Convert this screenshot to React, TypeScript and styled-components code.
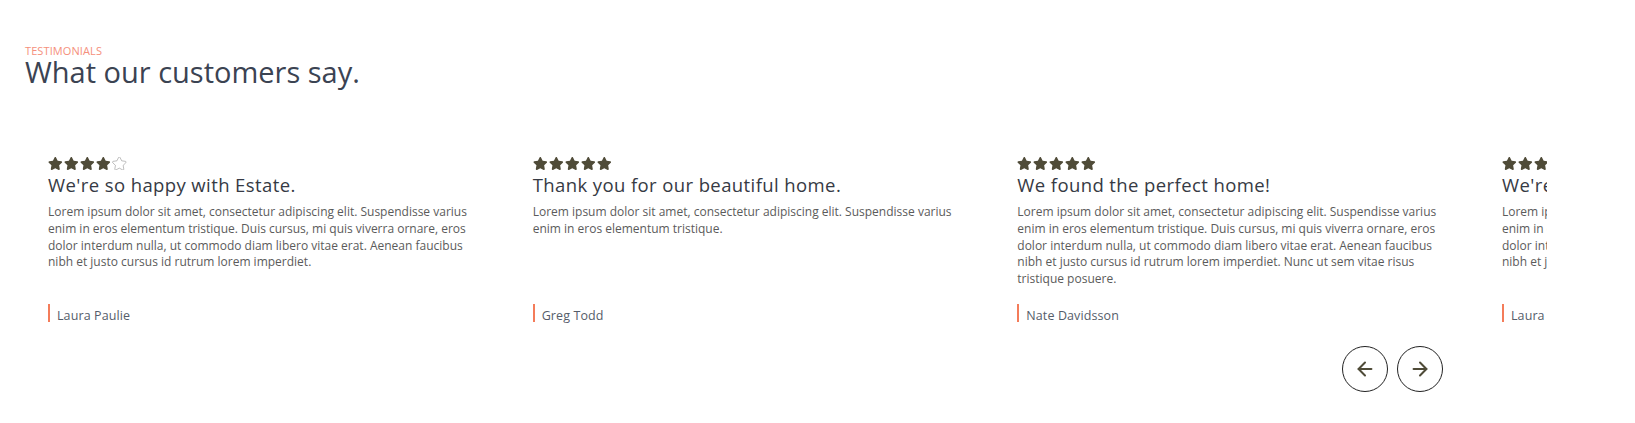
import React from "react";
import styled, { createGlobalStyle } from "styled-components";
import { ArrowLeft, ArrowRight } from "lucide-react";

const GlobalStyle = createGlobalStyle`
  html, body { margin: 0; padding: 0; background: #ffffff; }
  body { font-family: "Open Sans", "Liberation Sans", sans-serif; }
  * { box-sizing: border-box; }
`;

const Section = styled.section`
  padding: 45px 0 0 25px;
  width: 1635px;
  height: 423px;
  overflow: hidden;
`;

const Eyebrow = styled.div`
  font-size: 11px;
  line-height: 12px;
  color: #f5907c;
  text-transform: uppercase;
  letter-spacing: 0.1px;
`;

const Heading = styled.h2`
  margin: 0;
  font-size: 29px;
  line-height: 30px;
  font-weight: 400;
  color: #3b4352;
`;

const Mask = styled.div`
  width: 1522px;
  overflow: hidden;
  margin-top: 70px;
`;

const Track = styled.div`
  display: flex;
  align-items: stretch;
`;

const Slide = styled.article`
  flex: 0 0 484.667px;
  padding: 0 23px;
  display: flex;
  flex-direction: column;
`;

const Stars = styled.div`
  display: flex;
  gap: 1.4px;
  height: 13px;
  align-items: center;
`;

const CardTitle = styled.h3`
  margin: 3px 0 0;
  font-size: 18.5px;
  line-height: 24px;
  letter-spacing: 0.4px;
  font-weight: 400;
  color: #363a44;
  white-space: nowrap;
`;

const Body = styled.p`
  margin: 7px 0 16px;
  font-size: 12px;
  line-height: 16.75px;
  color: #5b5b5b;
`;

const Author = styled.div`
  margin-top: auto;
  display: flex;
  align-items: flex-start;
  gap: 7px;
`;

const AccentBar = styled.span`
  flex: 0 0 2px;
  height: 18px;
  background: #f47c5a;
`;

const AuthorName = styled.span`
  margin-top: 2px;
  font-size: 12.5px;
  line-height: 20px;
  letter-spacing: 0.1px;
  color: #555d6a;
  white-space: nowrap;
`;

const ArrowRow = styled.div`
  width: 1522px;
  display: flex;
  justify-content: flex-end;
  gap: 9px;
  padding-right: 104px;
  margin-top: 20px;
`;

const ArrowButton = styled.button`
  width: 46px;
  height: 46px;
  border-radius: 50%;
  border: 1px solid #222222;
  background: #ffffff;
  display: flex;
  align-items: center;
  justify-content: center;
  padding: 0;
  color: #4f4b38;
  cursor: pointer;
`;

const Star: React.FC<{ filled: boolean }> = ({ filled }) => (
  <svg width="14.6" height="13" viewBox="0 0 576 512" aria-hidden="true">
    <path
      d="M259.3 17.8L194 150.2 47.9 171.5c-26.2 3.8-36.7 36.1-17.7 54.6l105.7 103-25 145.5c-4.5 26.3 23.2 46 46.4 33.7L288 439.6l130.7 68.7c23.2 12.2 50.9-7.4 46.4-33.7l-25-145.5 105.7-103c19-18.5 8.5-50.8-17.700-54.6L382 150.2 316.7 17.8c-11.7-23.6-45.6-23.9-57.4 0z"
      fill={filled ? "#4f4b38" : "none"}
      stroke={filled ? "none" : "#8a8a8a"}
      strokeWidth={filled ? 0 : 22}
    />
  </svg>
);

type Testimonial = {
  rating: number;
  title: string;
  body: string;
  author: string;
};

const LONG =
  "Lorem ipsum dolor sit amet, consectetur adipiscing elit. Suspendisse varius enim in eros elementum tristique. Duis cursus, mi quis viverra ornare, eros dolor interdum nulla, ut commodo diam libero vitae erat. Aenean faucibus nibh et justo cursus id rutrum lorem imperdiet.";

const testimonials: Testimonial[] = [
  { rating: 4, title: "We're so happy with Estate.", body: LONG, author: "Laura Paulie" },
  {
    rating: 5,
    title: "Thank you for our beautiful home.",
    body: "Lorem ipsum dolor sit amet, consectetur adipiscing elit. Suspendisse varius enim in eros elementum tristique.",
    author: "Greg Todd",
  },
  {
    rating: 5,
    title: "We found the perfect home!",
    body: LONG + " Nunc ut sem vitae risus tristique posuere.",
    author: "Nate Davidsson",
  },
  { rating: 5, title: "We're so happy with Estate.", body: LONG, author: "Laura Paulie" },
];

export default function App() {
  return (
    <>
      <GlobalStyle />
      <Section>
        <Eyebrow>Testimonials</Eyebrow>
        <Heading>What our customers say.</Heading>
        <Mask>
          <Track>
            {testimonials.map((t, i) => (
              <Slide key={i}>
                <Stars>
                  {[0, 1, 2, 3, 4].map((s) => (
                    <Star key={s} filled={s < t.rating} />
                  ))}
                </Stars>
                <CardTitle>{t.title}</CardTitle>
                <Body>{t.body}</Body>
                <Author>
                  <AccentBar />
                  <AuthorName>{t.author}</AuthorName>
                </Author>
              </Slide>
            ))}
          </Track>
        </Mask>
        <ArrowRow>
          <ArrowButton aria-label="Previous">
            <ArrowLeft size={22} strokeWidth={2.2} />
          </ArrowButton>
          <ArrowButton aria-label="Next">
            <ArrowRight size={22} strokeWidth={2.2} />
          </ArrowButton>
        </ArrowRow>
      </Section>
    </>
  );
}
